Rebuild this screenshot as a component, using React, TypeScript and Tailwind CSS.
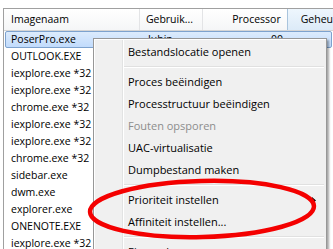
import React from 'react';

const processes = [
  'OUTLOOK.EXE',
  'iexplore.exe *32',
  'iexplore.exe *32',
  'chrome.exe *32',
  'iexplore.exe *32',
  'iexplore.exe *32',
  'chrome.exe *32',
  'sidebar.exe',
  'dwm.exe',
  'explorer.exe',
  'ONENOTE.EXE',
  'iexplore.exe *32',
];

type MenuEntry = { label: string; disabled?: boolean; submenu?: boolean } | 'sep';

const menu: MenuEntry[] = [
  { label: 'Bestandslocatie openen' },
  'sep',
  { label: 'Proces beëindigen' },
  { label: 'Processtructuur beëindigen' },
  { label: 'Fouten opsporen', disabled: true },
  { label: 'UAC-virtualisatie' },
  { label: 'Dumpbestand maken' },
  'sep',
  { label: 'Prioriteit instellen', submenu: true },
  { label: 'Affiniteit instellen...' },
  'sep',
  { label: 'Eigenschappen' },
];

export default function App() {
  return (
    <div
      className="relative w-[333px] h-[249px] overflow-hidden bg-white text-[10.5px] text-black"
      style={{ fontFamily: '"Segoe UI", "Open Sans", sans-serif' }}
    >
      <div className="pt-[8px] pl-[3px]">
        <div className="border-l border-t border-[#a0a0a0]">
          {/* column headers */}
          <div className="flex h-[22px] border-b border-[#d5d5d5] bg-gradient-to-b from-white to-[#f5f6f7]">
            <div className="w-[137px] flex items-center pl-[7px] border-r border-[#e3e4e6]">Imagenaam</div>
            <div className="w-[64px] flex items-center pl-[6px] border-r border-[#e3e4e6]">Gebruik...</div>
            <div className="w-[85px] flex items-center justify-end pr-[6px] border-r border-[#a9c4dd]">Processor</div>
            <div className="flex-1 flex items-center pl-[13px] bg-gradient-to-b from-[#eef6fd] to-[#dcebf8]">Geheu</div>
          </div>

          {/* selected row */}
          <div className="flex h-[17px] items-center mx-[1px] rounded-[2px] border border-[#7da2ce] bg-gradient-to-b from-[#dcebfc] to-[#c1dbfc]">
            <div className="w-[136px] pl-[5px]">PoserPro.exe</div>
            <div className="w-[64px] pl-[6px]">Jubin</div>
            <div className="w-[85px] text-right pr-[8px]">00</div>
          </div>

          {processes.map((name, i) => (
            <div key={i} className="flex h-[17px] items-center">
              <div className="w-[137px] pl-[7px] whitespace-nowrap">{name}</div>
            </div>
          ))}
        </div>
      </div>

      {/* context menu */}
      <div className="absolute left-[93px] top-[38px] w-[234px] h-[240px] border border-[#979797] bg-[#f0f0f0] text-[11px] shadow-[2px_2px_2px_rgba(0,0,0,0.35)]">
        <div className="flex h-full border border-white border-r-0">
          <div className="w-[28px] border-r border-[#e2e3e3]" />
          <div className="flex-1 border-l border-white pt-[1px] pr-[2px]">
            {menu.map((m, i) =>
              m === 'sep' ? (
                <div key={i} className="h-[8px] flex flex-col justify-center">
                  <div className="h-[1px] bg-[#e0e0e0]" />
                  <div className="h-[1px] bg-white" />
                </div>
              ) : (
                <div
                  key={i}
                  className={`relative flex h-[22px] items-center pl-[4px] whitespace-nowrap ${
                    m.disabled ? 'text-[#8d8d8d]' : 'text-black'
                  }`}
                >
                  {m.label}
                  {m.submenu && (
                    <svg className="absolute right-[8px] top-[8px]" width="4" height="7" viewBox="0 0 4 7">
                      <path d="M0 0 L4 3.5 L0 7 Z" fill="#000" />
                    </svg>
                  )}
                </div>
              )
            )}
          </div>
        </div>
      </div>

      {/* red ellipse annotation */}
      <svg className="absolute left-0 top-0 pointer-events-none" width="333" height="249">
        <ellipse
          cx="202"
          cy="209"
          rx="112"
          ry="28"
          fill="none"
          stroke="#f40000"
          strokeWidth="4.5"
          transform="rotate(-1.5 202 209)"
        />
      </svg>
    </div>
  );
}
